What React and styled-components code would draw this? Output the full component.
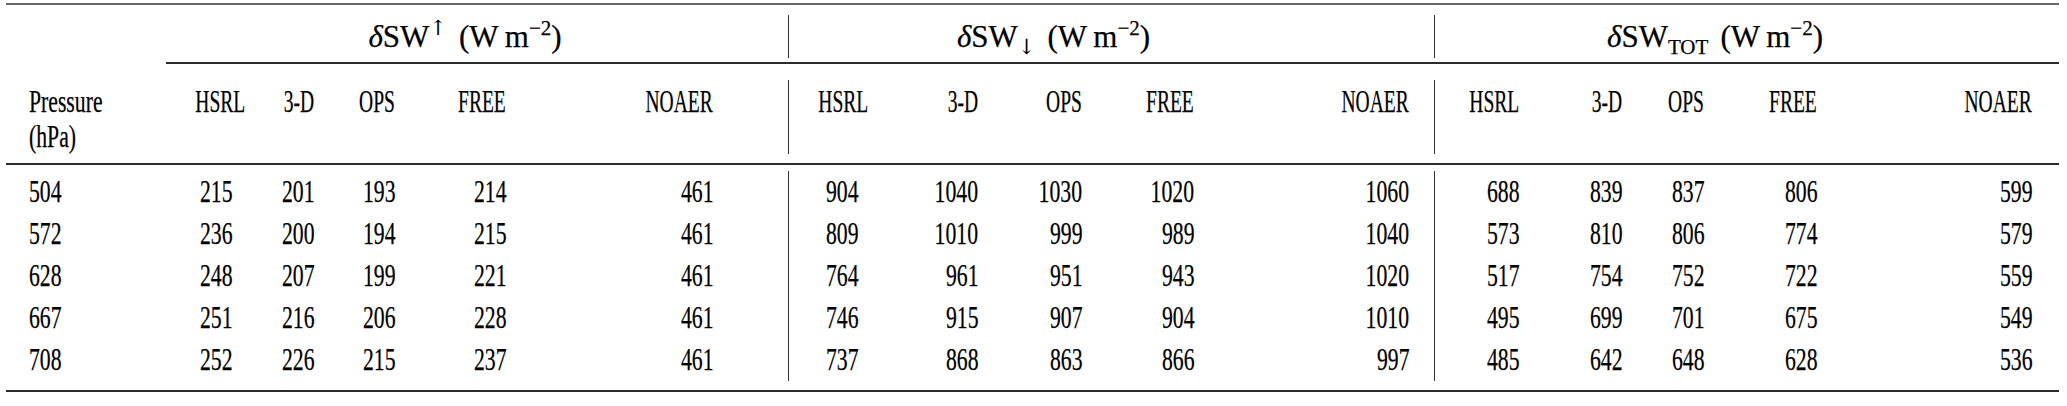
import React from 'react';
import styled, { createGlobalStyle } from 'styled-components';

const GlobalStyle = createGlobalStyle`
  html, body {
    margin: 0;
    padding: 0;
    background: #fff;
  }
  body {
    font-family: "Liberation Serif", "Times New Roman", serif;
    color: #000;
  }
  * { box-sizing: border-box; }
`;

// column layout of the three flux groups
const groups = [
  { key: 'up', cols: '66px 82px 81px 111px 207px', width: 622, tail: 75, shift: 12 },
  { key: 'down', cols: '69px 120px 104px 112px 215px', width: 646, tail: 26, shift: 58 },
  { key: 'tot', cols: '84px 103px 82px 113px 215px', width: 625, tail: 28, shift: 32 },
];

const experiments = ['HSRL', '3-D', 'OPS', 'FREE', 'NOAER'];

const rows = [
  ['504', [215, 201, 193, 214, 461], [904, 1040, 1030, 1020, 1060], [688, 839, 837, 806, 599]],
  ['572', [236, 200, 194, 215, 461], [809, 1010, 999, 989, 1040], [573, 810, 806, 774, 579]],
  ['628', [248, 207, 199, 221, 461], [764, 961, 951, 943, 1020], [517, 754, 752, 722, 559]],
  ['667', [251, 216, 206, 228, 461], [746, 915, 907, 904, 1010], [495, 699, 701, 675, 549]],
  ['708', [252, 226, 215, 237, 461], [737, 868, 863, 866, 997], [485, 642, 648, 628, 536]],
];

export default function App() {
  return (
    <>
      <GlobalStyle />
      <Table>
        <Rule $color="#666" />

        <Section $pad="10px 0 4px">
          <Lead />
          {groups.map((g, i) => (
            <Group key={g.key} $width={g.width} $divided={i > 0}>
              <Title $shift={g.shift}>
                <Delta>δ</Delta>SW
                {g.key === 'up' && <Sup><Arrow>↑</Arrow></Sup>}
                {g.key === 'down' && <Sub><Arrow>↓</Arrow></Sub>}
                {g.key === 'tot' && <Sub>TOT</Sub>}
                <Unit>(W{'\u2009'}m<Sup>−2</Sup>)</Unit>
              </Title>
            </Group>
          ))}
        </Section>

        <Rule $inset={160} />

        <Section $pad="16px 0 9px">
          <Lead $head>
            <Line><Squeeze $origin="left">Pressure</Squeeze></Line>
            <Line><Squeeze $origin="left">(hPa)</Squeeze></Line>
          </Lead>
          {groups.map((g, i) => (
            <Group key={g.key} $width={g.width} $divided={i > 0} $cols={g.cols} $tail={g.tail} $head>
              {experiments.map((name) => (
                <Line key={name} $right>
                  <Squeeze $narrow>{name}</Squeeze>
                </Line>
              ))}
            </Group>
          ))}
        </Section>

        <Rule />

        <Section $pad="6px 0 9px">
          <Lead>
            {rows.map((r) => (
              <Cell key={r[0]} $left>
                <Squeeze $origin="left">{r[0]}</Squeeze>
              </Cell>
            ))}
          </Lead>
          {groups.map((g, i) => (
            <Group key={g.key} $width={g.width} $divided={i > 0} $cols={g.cols} $tail={g.tail}>
              {rows.map((r) =>
                r[i + 1].map((v, j) => (
                  <Cell key={r[0] + '-' + j}>
                    <Squeeze>{v}</Squeeze>
                  </Cell>
                ))
              )}
            </Group>
          ))}
        </Section>

        <Rule />
      </Table>
    </>
  );
}

const Table = styled.div`
  width: 2053px;
  margin-left: 6px;
  padding-top: 3px;
  font-size: 31px;
  -webkit-text-stroke: 0.25px #000;
`;

const Rule = styled.div`
  height: 2px;
  background: ${(p) => p.$color || '#2b2b2b'};
  margin-left: ${(p) => p.$inset || 0}px;
`;

const Section = styled.div`
  display: flex;
  padding: ${(p) => p.$pad};
`;

const Lead = styled.div`
  flex: none;
  width: 160px;
  padding-left: 23px;
  padding-top: ${(p) => (p.$head ? 4 : 0)}px;
`;

const Group = styled.div`
  flex: none;
  width: ${(p) => p.$width}px;
  border-left: ${(p) => (p.$divided ? '1.5px solid #333' : '0')};
  display: ${(p) => (p.$cols ? 'grid' : 'block')};
  grid-template-columns: ${(p) => p.$cols || 'none'};
  grid-auto-rows: 42px;
  align-content: start;
  padding-right: ${(p) => p.$tail || 0}px;
  padding-top: ${(p) => (p.$head ? 4 : 0)}px;
`;

const Title = styled.div`
  height: 43px;
  line-height: 43px;
  font-size: 31px;
  text-align: center;
  white-space: nowrap;
  padding-right: ${(p) => p.$shift * 2}px;
`;

const Unit = styled.span`
  margin-left: 12px;
`;

const Line = styled.div`
  height: 35px;
  line-height: 35px;
  white-space: nowrap;
  text-align: ${(p) => (p.$right ? 'right' : 'left')};
`;

const Cell = styled.div`
  height: 42px;
  line-height: 42px;
  white-space: nowrap;
  text-align: ${(p) => (p.$left ? 'left' : 'right')};
`;

const Squeeze = styled.span`
  display: inline-block;
  transform: scaleX(${(p) => (p.$narrow ? 0.63 : 0.7)});
  transform-origin: ${(p) => p.$origin || 'right'} center;
`;

const Delta = styled.span`
  font-style: italic;
`;

const Arrow = styled.span`
  font-family: "DejaVu Serif", serif;
  -webkit-text-stroke: 0;
`;

const Sup = styled.span`
  font-size: 21px;
  line-height: 0;
  vertical-align: 12px;
`;

const Sub = styled.span`
  font-size: 21px;
  line-height: 0;
  vertical-align: -7px;
`;
